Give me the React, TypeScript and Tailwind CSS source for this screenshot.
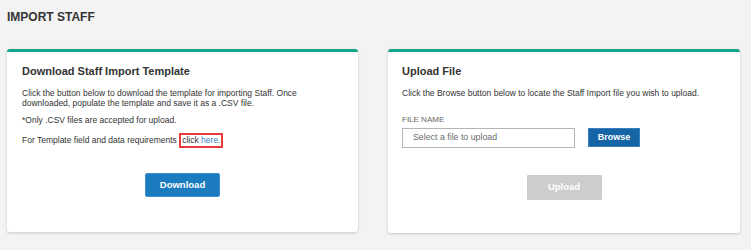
import React from 'react';

const font = { fontFamily: '"Liberation Sans", Arial, sans-serif' };

export default function App() {
  return (
    <div className="min-h-[250px] w-[751px] bg-[#f3f3f3] pl-[7px] pr-[11px] pt-[10px] text-[#333333]" style={font}>
      <h1 className="text-[12px] font-bold leading-[14px]">IMPORT STAFF</h1>

      <div className="mt-[25px] grid grid-cols-[351px_352px] gap-[30px]">
        {/* Download template */}
        <section className="flex h-[183px] flex-col rounded-[3px] border-t-[3px] border-[#17a589] bg-white px-[15px] pt-[13px] shadow-[0_1px_3px_rgba(0,0,0,0.18)]">
          <h2 className="text-[11px] font-bold leading-[13px] text-[#333]">Download Staff Import Template</h2>
          <p className="mt-[11px] text-[8.5px] leading-[9.5px]">
            Click the button below to download the template for importing Staff. Once
            <br />
            downloaded, populate the template and save it as a .CSV file.
          </p>
          <p className="mt-[8px] text-[8.5px] leading-[9.5px]">*Only .CSV files are accepted for upload.</p>
          <p className="mt-[9px] text-[8.5px] leading-[9.5px]">
            For Template field and data requirements{' '}
            <span className="-my-[2px] inline-block border-2 border-[#e83b3b] px-[1px] py-[1px] leading-[9.5px]">
              click <a className="text-[#3c7fc4]">here.</a>
            </span>
          </p>
          <div className="mt-[27px] flex justify-center">
            <button className="h-[24px] w-[75px] rounded-[2px] border border-[#3b8fd0] bg-[#1a7bbf] text-[9.5px] font-bold text-white">
              Download
            </button>
          </div>
        </section>

        {/* Upload file */}
        <section className="flex h-[184px] flex-col rounded-[3px] border-t-[3px] border-[#17a589] bg-white px-[14px] pt-[13px] shadow-[0_1px_3px_rgba(0,0,0,0.18)]">
          <h2 className="text-[11px] font-bold leading-[13px] text-[#333]">Upload File</h2>
          <p className="mt-[11px] text-[8.5px] leading-[9.5px]">
            Click the Browse button below to locate the Staff Import file you wish to upload.
          </p>
          <label className="mt-[16px] text-[8px] leading-[9px] text-[#666]">FILE NAME</label>
          <div className="mt-[4px] flex items-center gap-[13px]">
            <div className="flex h-[20px] w-[173px] items-center border border-[#b5b5b5] pl-[10px] text-[8.8px] text-[#6b6b6b]">
              Select a file to upload
            </div>
            <button className="h-[19px] w-[52px] border border-[#3a80bf] bg-[#1565a6] text-[9px] font-bold text-white">
              Browse
            </button>
          </div>
          <div className="mt-[27px] flex justify-center">
            <button className="h-[25px] w-[75px] rounded-[1px] bg-[#cccdcc] text-[9.5px] font-bold text-white">
              Upload
            </button>
          </div>
        </section>
      </div>
    </div>
  );
}
